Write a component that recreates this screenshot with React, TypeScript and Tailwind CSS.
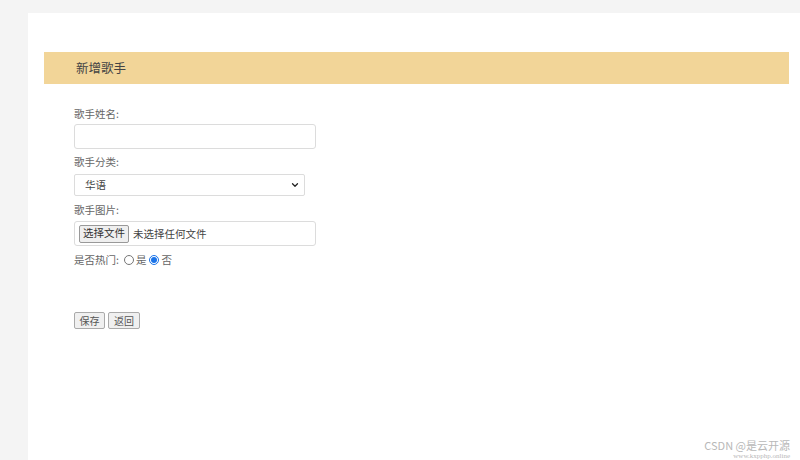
import { ChevronDown } from 'lucide-react';

const font = { fontFamily: '"Microsoft YaHei", "Noto Sans CJK SC", "Liberation Sans", sans-serif' };

export default function App() {
  return (
    <div className="relative h-[460px] overflow-hidden bg-[#f4f4f4] pt-[13px] pl-[28px]" style={font}>
      <div className="h-[460px] bg-white pt-[39px] pl-[16px] pr-[11px]">
        {/* Header */}
        <div className="flex h-[32px] items-center bg-[#f2d598] pl-[32px] text-[12.5px] text-[#444]">
          新增歌手
        </div>

        {/* Form */}
        <form className="flex flex-col pl-[30px] text-[10.5px] text-[#666]">
          <label className="mt-[22px] h-[16px] leading-[16px]">歌手姓名:</label>
          <input
            type="text"
            className="mt-[2px] h-[25px] w-[242px] rounded-[3px] border border-[#dcdcdc] bg-white px-2 outline-none"
          />

          <label className="mt-[5px] h-[16px] leading-[16px]">歌手分类:</label>
          <div className="relative mt-[4px] h-[22px] w-[231px]">
            <select className="h-full w-full appearance-none rounded-[2px] border border-[#dcdcdc] bg-white pl-[10px] text-[10.5px] text-[#444] outline-none">
              <option>华语</option>
            </select>
            <ChevronDown className="pointer-events-none absolute right-[5px] top-[6px] h-[10px] w-[10px] text-[#222]" strokeWidth={3} />
          </div>

          <label className="mt-[6px] h-[16px] leading-[16px]">歌手图片:</label>
          <div className="mt-[3px] flex h-[25px] w-[242px] items-center rounded-[3px] border border-[#dcdcdc] bg-white pl-[4px] text-[#444]">
            <button
              type="button"
              className="h-[18px] w-[50px] rounded-[2px] border border-[#999] bg-[#efefef] text-[10.5px] leading-none text-[#333]"
            >
              选择文件
            </button>
            <span className="ml-[4px]">未选择任何文件</span>
          </div>

          <div className="mt-[6px] flex h-[16px] items-center leading-[16px]">
            <span>是否热门:</span>
            <input type="radio" name="hot" className="ml-[5px] h-[10px] w-[10px] accent-[#1a73e8]" />
            <span className="ml-[2px]">是</span>
            <input type="radio" name="hot" defaultChecked className="ml-[3px] h-[10px] w-[10px] accent-[#1a73e8]" />
            <span className="ml-[2px]">否</span>
          </div>

          <div className="mt-[44px] flex gap-[3px]">
            <button
              type="button"
              className="h-[17px] w-[31px] rounded-[2px] border border-[#aaa] bg-[#f0f0f0] text-[10px] leading-none text-[#555]"
            >
              保存
            </button>
            <button
              type="button"
              className="h-[17px] w-[32px] rounded-[2px] border border-[#aaa] bg-[#f0f0f0] text-[10px] leading-none text-[#555]"
            >
              返回
            </button>
          </div>
        </form>
      </div>

      {/* Watermark */}
      <div className="absolute right-[10px] top-[439px] flex flex-col items-end text-[#b8b8b8]">
        <span className="text-[11px] leading-[13px]">CSDN @是云开源</span>
        <span className="text-[7px] leading-[8px]" style={{ fontFamily: '"Liberation Serif", serif' }}>www.kxpphp.online</span>
      </div>
    </div>
  );
}
